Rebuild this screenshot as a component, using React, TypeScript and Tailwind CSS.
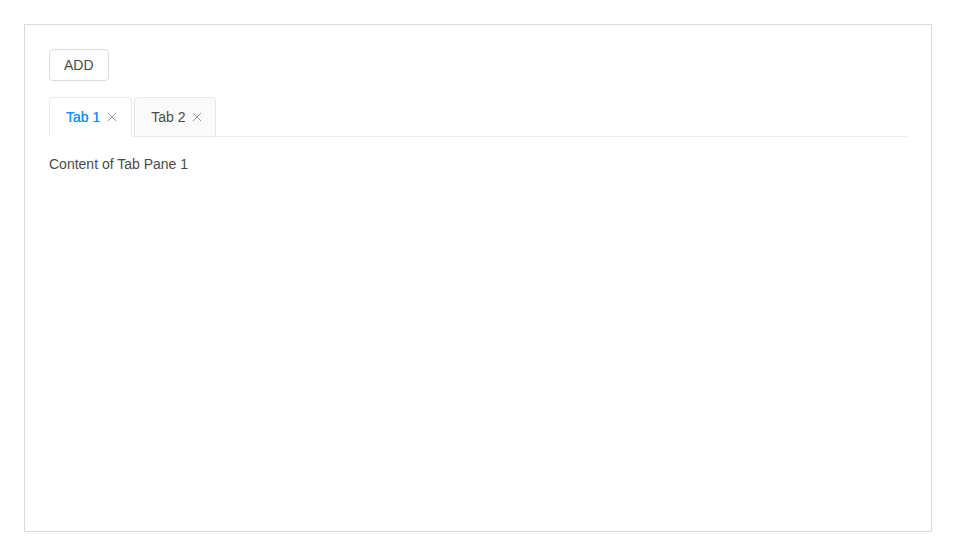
import React, { useState } from "react";

const font = { fontFamily: '"Liberation Sans", Arial, sans-serif' };

function CloseIcon() {
  return (
    <svg width="10" height="10" viewBox="0 0 10 10" className="block">
      <path d="M1 1 L9 9 M9 1 L1 9" stroke="currentColor" strokeWidth="1" fill="none" />
    </svg>
  );
}

export default function App() {
  const [active, setActive] = useState(0);
  const tabs = ["Tab 1", "Tab 2"];
  return (
    <div className="h-screen w-full bg-white p-6" style={font}>
      <div className="h-full border border-[#d9d9d9] bg-white p-6">
        <button className="h-8 rounded-[4px] border border-[#d9d9d9] bg-white px-[14px] pt-px text-[14px] text-[#4a4a4a]">
          ADD
        </button>
        <div className="mt-4 flex h-10 items-end border-b border-[#eeeeee]">
          {tabs.map((t, i) => (
            <div
              key={t}
              onClick={() => setActive(i)}
              className={
                i === active
                  ? "mr-[2px] -mb-px flex h-10 cursor-pointer items-center rounded-t-[4px] border border-[#e8e8e8] border-b-white bg-white pl-4 pr-[14px] text-[14px] text-[#1890ff] [text-shadow:0_0_0.3px_#1890ff]"
                  : "mr-[2px] -mb-px flex h-10 cursor-pointer items-center rounded-t-[4px] border border-[#e8e8e8] bg-[#fafafa] pl-4 pr-[13px] text-[14px] text-[#4a4a4a]"
              }
            >
              <span>{t}</span>
              <span className={i === active ? "ml-[7px] text-[#999999]" : "ml-[6px] text-[#999999]"}>
                <CloseIcon />
              </span>
            </div>
          ))}
        </div>
        <div className="mt-4 text-[14px] leading-[22px] text-[#4a4a4a]">Content of Tab Pane {active + 1}</div>
      </div>
    </div>
  );
}
